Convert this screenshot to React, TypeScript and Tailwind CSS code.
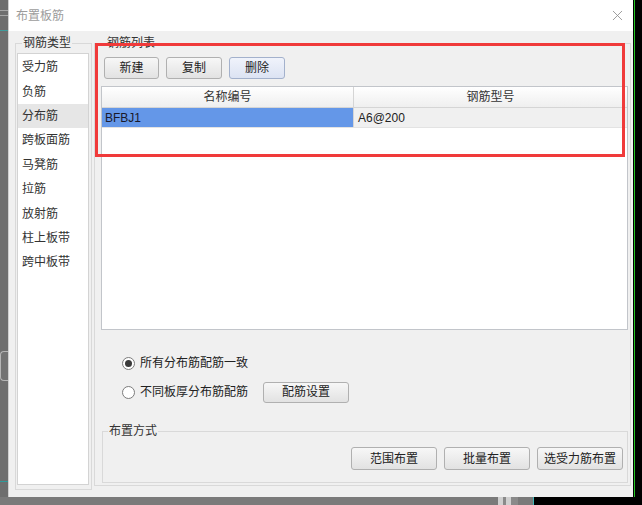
import { X } from "lucide-react";
import type { ReactNode } from "react";

const types = ["受力筋", "负筋", "分布筋", "跨板面筋", "马凳筋", "拉筋", "放射筋", "柱上板带", "跨中板带"];

const Btn = ({ children, w, h = "h-[22px]", active = false }: { children: ReactNode; w: string; h?: string; active?: boolean }) => (
  <button
    className={
      active
        ? `${w} ${h} rounded-[3px] border border-[#a3b1cc] bg-linear-to-b from-[#f0f3fb] to-[#dce3f3] text-[12px] leading-none text-[#222]`
        : `${w} ${h} rounded-[3px] border border-[#b0b0b0] bg-linear-to-b from-[#f7f7f7] to-[#e2e2e2] text-[12px] leading-none text-[#222]`
    }
  >
    {children}
  </button>
);

const Radio = ({ checked }: { checked?: boolean }) => (
  <span className="flex h-[13px] w-[13px] items-center justify-center rounded-full border border-[#7c7c7c] bg-white">
    {checked && <span className="h-[7px] w-[7px] rounded-full bg-[#3a3a3a]" />}
  </span>
);

export default function App() {
  return (
    <div className="flex h-[505px] w-[642px] flex-col overflow-hidden bg-[#707070] font-['Liberation_Sans','Noto_Sans_CJK_SC',sans-serif] text-[12px] text-[#222]">
      <div className="flex h-[497px]">
        {/* canvas strip, left */}
        <div className="flex w-[8px] flex-col bg-[#6e6e6e]">
          <div className="h-[10px]" />
          <div className="h-px bg-[#a5a5a5]" />
          <div className="h-[4px]" />
          <div className="h-px bg-[#a5a5a5]" />
          <div className="h-[14px]" />
          <div className="h-px bg-[#3f9c9c]" />
          <div className="h-[320px]" />
          <div className="h-[30px] rounded-l-[4px] border border-r-0 border-[#b5b5b5] bg-[#737373]" />
          <div className="h-[100px]" />
          <div className="h-px bg-[#2f9a9a]" />
        </div>

        {/* dialog */}
        <div className="relative flex w-[625px] flex-col border-l border-[#cfcfcf] bg-[#f0f0f0]">
          <div className="flex h-[31px] items-center justify-between bg-white pl-[7px] pr-[7px]">
            <span className="text-[12px] text-[#9c9c9c]">布置板筋</span>
            <X size={17} strokeWidth={1.2} className="text-[#8e8e8e]" />
          </div>

          <div className="flex flex-1 gap-[2px] pb-[7px] pl-[6px] pr-[2px] pt-[4px]">
            <fieldset className="w-[77px] border border-[#d9d9d9] pb-[4px] pl-[1px] pr-[2px]">
              <legend className="ml-[5px] px-px leading-[16px] text-[#333]">钢筋类型</legend>
              <div className="mt-[2px] h-[432px] border border-[#d3d3d3] bg-white pt-px">
                {types.map((t) => (
                  <div
                    key={t}
                    className={
                      t === "分布筋"
                        ? "flex h-[24.4px] items-center bg-[#e6e6e6] pl-[4px] text-[#333]"
                        : "flex h-[24.4px] items-center pl-[4px] text-[#333]"
                    }
                  >
                    {t}
                  </div>
                ))}
              </div>
            </fieldset>

            <fieldset className="flex-1 self-start border border-[#d9d9d9] pb-[2px] pl-[6px] pr-[2px]">
              <legend className="ml-[5px] px-px leading-[16px] text-[#333]">钢筋列表</legend>
              <div className="ml-[3px] mt-[6px] flex gap-[7px]">
                <Btn w="w-[55px]">新建</Btn>
                <Btn w="w-[56px]">复制</Btn>
                <Btn w="w-[56px]" active>
                  删除
                </Btn>
              </div>

              <div className="mt-[7px] h-[244px] border border-[#c2c5ca] bg-white">
                <div className="flex h-[21px] border-b border-[#d5d5d5] bg-linear-to-b from-white to-[#efefef] text-[#333]">
                  <div className="flex w-[252px] items-center justify-center border-r border-[#d5d5d5]">名称编号</div>
                  <div className="flex flex-1 items-center justify-center">钢筋型号</div>
                </div>
                <div className="flex h-[20px] border-b border-[#e3e3e3]">
                  <div className="flex w-[252px] items-center border-r border-[#d5d5d5] bg-[#6497e8] pl-[3px] text-[#1a1a2a]">BFBJ1</div>
                  <div className="flex flex-1 items-center bg-[#f0f0f0] pl-[4px] text-[#222]">A6@200</div>
                </div>
              </div>

              <div className="ml-[21px] mt-[23px] flex h-[20px] items-center gap-[5px]">
                <Radio checked />
                <span>所有分布筋配筋一致</span>
              </div>
              <div className="ml-[21px] mt-[8px] flex h-[22px] items-center gap-[5px]">
                <Radio />
                <span>不同板厚分布筋配筋</span>
                <span className="ml-[10px] flex">
                  <Btn w="w-[86px]" h="h-[21px]">
                    配筋设置
                  </Btn>
                </span>
              </div>

              <fieldset className="ml-px mt-[20px] border border-[#d9d9d9] pb-[12px] pl-[5px] pr-[4px]">
                <legend className="px-px leading-[16px] text-[#333]">布置方式</legend>
                <div className="mt-[8px] flex justify-end gap-[7px]">
                  <Btn w="w-[86px]" h="h-[23px]">
                    范围布置
                  </Btn>
                  <Btn w="w-[86px]" h="h-[23px]">
                    批量布置
                  </Btn>
                  <Btn w="w-[86px]" h="h-[23px]">
                    选受力筋布置
                  </Btn>
                </div>
              </fieldset>
            </fieldset>
          </div>

          {/* red annotation box */}
          <div className="pointer-events-none absolute left-[86px] top-[43px] h-[114px] w-[530px] border-[3px] border-[#f03a3a]" />
        </div>

        {/* canvas strip, right */}
        <div className="flex flex-1 bg-black">
          <div className="ml-px w-px bg-[#22c422]" />
        </div>
      </div>

      {/* canvas strip, bottom */}
      <div className="flex h-[8px]">
        <div className="w-[498px] bg-[#7a7a7a]" />
        <div className="flex w-[20px] gap-[3px] bg-[#8a8a8a]">
          <div className="w-[5px] bg-[#d0d0d0]" />
          <div className="w-[5px] bg-[#d0d0d0]" />
        </div>
        <div className="w-[15px] bg-[#7a7a7a]" />
        <div className="w-px bg-[#3fb8b8]" />
        <div className="flex-1 bg-black" />
      </div>
    </div>
  );
}
